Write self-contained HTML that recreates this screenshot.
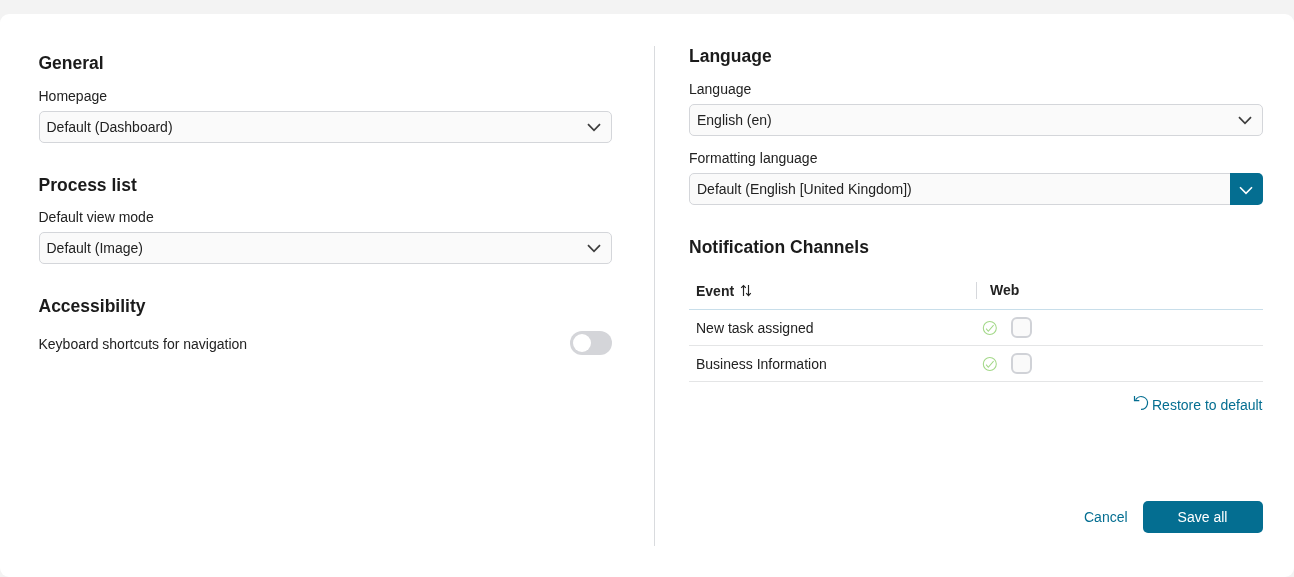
<!DOCTYPE html>
<html lang="en">
<head>
<meta charset="utf-8">
<title>Settings</title>
<style>
*{box-sizing:border-box;margin:0;padding:0}
html,body{width:1294px;height:577px;overflow:hidden;background:#f3f3f3}
body{font-family:"Liberation Sans",Arial,sans-serif;font-size:14px;color:#222;position:relative}
.card{will-change:transform;position:absolute;left:0;top:14px;width:1294px;height:563px;background:#fff;border-radius:9px}
.divider{position:absolute;left:654px;top:32px;width:1px;height:500px;background:#d9dbde}
h2{position:absolute;font-size:17.5px;font-weight:700;color:#1b1b1b;line-height:20px;white-space:nowrap}
.lbl{position:absolute;font-size:14px;line-height:16px;color:#222;white-space:nowrap}
.sel{position:absolute;height:32px;border:1px solid #d4d6da;border-radius:5px;background:#fafafa;font-size:14px;line-height:30px;padding-left:6.500px;color:#222;white-space:nowrap}
.sel svg{position:absolute;right:9.600px;top:10.700px}
.btn-dd{position:absolute;left:1230px;top:159px;width:33px;height:32px;background:#046e91;border-radius:0 5px 5px 0}
.btn-dd svg{position:absolute;left:9.300px;top:12.600px}
.toggle{position:absolute;left:570px;top:317px;width:42px;height:24px;border-radius:12px;background:#d4d5d9}
.toggle i{position:absolute;left:3px;top:3px;width:18px;height:18px;border-radius:50%;background:#fff}
.th{position:absolute;font-weight:700;font-size:14px;line-height:16px;color:#222}
.hl{position:absolute;left:689px;width:574px;height:1px;background:#e4e5e6}
.cb{position:absolute;width:21px;height:21px;border:2px solid #d0d2d7;border-radius:6px;background:#fafafa}
.link{position:absolute;color:#046e91;font-size:14px;line-height:16px;white-space:nowrap}
.save{position:absolute;left:1143px;top:487px;width:120px;height:32px;border-radius:5px;background:#046e91;color:#fff;font-size:14px;line-height:32px;text-align:center;padding-right:1px}
</style>
</head>
<body>
<div class="card">
  <div class="divider"></div>

  <h2 style="left:38.500px;top:39px">General</h2>
  <div class="lbl" style="left:38.500px;top:74px">Homepage</div>
  <div class="sel" style="left:39px;top:97px;width:573px">Default (Dashboard)
    <svg width="14" height="9" viewBox="0 0 14 9"><path d="M1 1.2 L7 7.4 L13 1.2" fill="none" stroke="#3d3d3d" stroke-width="1.7"/></svg>
  </div>

  <h2 style="left:38.500px;top:161px">Process list</h2>
  <div class="lbl" style="left:38.500px;top:195px">Default view mode</div>
  <div class="sel" style="left:39px;top:218px;width:573px">Default (Image)
    <svg width="14" height="9" viewBox="0 0 14 9"><path d="M1 1.2 L7 7.4 L13 1.2" fill="none" stroke="#3d3d3d" stroke-width="1.7"/></svg>
  </div>

  <h2 style="left:38.500px;top:282px">Accessibility</h2>
  <div class="lbl" style="left:38.500px;top:322px">Keyboard shortcuts for navigation</div>
  <div class="toggle"><i></i></div>

  <h2 style="left:689px;top:32px">Language</h2>
  <div class="lbl" style="left:689px;top:67px">Language</div>
  <div class="sel" style="left:689px;top:90px;width:574px;padding-left:7px">English (en)
    <svg width="14" height="9" viewBox="0 0 14 9"><path d="M1 1.2 L7 7.4 L13 1.2" fill="none" stroke="#3d3d3d" stroke-width="1.7"/></svg>
  </div>
  <div class="lbl" style="left:689px;top:136px">Formatting language</div>
  <div class="sel" style="left:689px;top:159px;width:542px;border-radius:5px 0 0 5px;padding-left:7px">Default (English [United Kingdom])</div>
  <div class="btn-dd"><svg width="14" height="9" viewBox="0 0 14 9"><path d="M1 1.2 L7 7.4 L13 1.2" fill="none" stroke="#fff" stroke-width="1.6"/></svg></div>

  <h2 style="left:689px;top:223px">Notification Channels</h2>
  <div class="th" style="left:696px;top:269px">Event</div>
  <svg style="position:absolute;left:739px;top:270px" width="14" height="13" viewBox="0 0 14 13"><path d="M4.500 12V1.500M2.200 3.900L4.500 1.500L6.800 3.900M9.500 1.100V11.600M7.200 9.200L9.500 11.600L11.800 9.200" fill="none" stroke="#222" stroke-width="1.15"/></svg>
  <div style="position:absolute;left:976px;top:268px;width:1px;height:17px;background:#d6d8dc"></div>
  <div class="th" style="left:990px;top:268px">Web</div>
  <div class="hl" style="top:295px;background:#c8deea"></div>

  <div class="lbl" style="left:696px;top:306px">New task assigned</div>
  <svg style="position:absolute;left:982px;top:306px" width="16" height="16" viewBox="0 0 16 16"><circle cx="7.800" cy="8" r="6.500" fill="none" stroke="#a3d888" stroke-width="1.050"/><path d="M4.100 8.600L6.300 11.300L11.600 5.100" fill="none" stroke="#a3d888" stroke-width="1.050"/></svg>
  <div class="cb" style="left:1011px;top:303px"></div>
  <div class="hl" style="top:331px"></div>

  <div class="lbl" style="left:696px;top:342px">Business Information</div>
  <svg style="position:absolute;left:982px;top:342px" width="16" height="16" viewBox="0 0 16 16"><circle cx="7.800" cy="8" r="6.500" fill="none" stroke="#a3d888" stroke-width="1.050"/><path d="M4.100 8.600L6.300 11.300L11.600 5.100" fill="none" stroke="#a3d888" stroke-width="1.050"/></svg>
  <div class="cb" style="left:1011px;top:339px"></div>
  <div class="hl" style="top:367px"></div>

  <svg style="position:absolute;left:1132px;top:380px" width="18" height="18" viewBox="0 0 18 18"><path d="M3.600 5.800A6.400 6.400 0 1 1 9 15.400" fill="none" stroke="#046e91" stroke-width="1.200"/><path d="M2.500 2V6.600H7.300" fill="none" stroke="#046e91" stroke-width="1.200"/></svg>
  <div class="link" style="left:1152px;top:383px">Restore to default</div>

  <div class="link" style="left:1084px;top:495px">Cancel</div>
  <div class="save">Save all</div>
</div>
</body>
</html>
